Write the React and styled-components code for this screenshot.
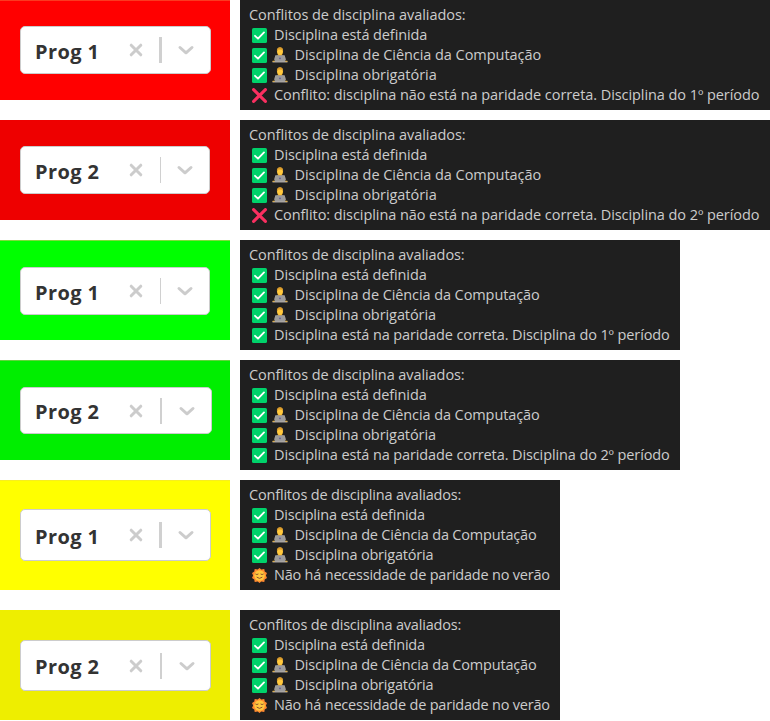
import React from "react";
import styled, { createGlobalStyle } from "styled-components";

const GlobalStyle = createGlobalStyle`
  body { margin: 0; background: #fff; overflow: hidden; }
`;

const Page = styled.main`
  width: 770px;
  height: 721px;
  box-sizing: border-box;
  overflow: hidden;
  font-family: "Open Sans", "Noto Sans", sans-serif;
`;

const Row = styled.section`
  display: flex;
  align-items: flex-start;
  gap: 10px;
  height: 110px;
  margin-bottom: ${(p) => p.$after}px;
`;

const Cell = styled.div`
  flex: none;
  width: 230px;
  height: ${(p) => p.$height}px;
  box-sizing: border-box;
  background: ${(p) => p.$color};
  border-top: 1px solid ${(p) => p.$edge};
  padding: ${(p) => p.$top - 1}px 0 0 20px;
`;

const Select = styled.div`
  display: flex;
  align-items: center;
  box-sizing: border-box;
  width: ${(p) => p.$width}px;
  height: ${(p) => p.$height}px;
  padding-left: 14px;
  background: #fff;
  border: 1px solid #ccc;
  border-radius: 5px;
`;

const Value = styled.span`
  width: 94px;
  color: #333;
  font-size: 20px;
  font-weight: 700;
  line-height: 26px;
  letter-spacing: 0.4px;
  padding-top: 3px;
  white-space: nowrap;
`;

const Glyph = styled.svg`
  flex: none;
  display: block;
`;

const Divider = styled.span`
  display: flex;
  justify-content: center;
  box-sizing: border-box;
  width: ${(p) => p.$width}px;
  padding-left: 1px;
`;

const Separator = styled.span`
  width: ${(p) => p.$width}px;
  height: 26px;
  background: #d0d0d0;
`;

const Tooltip = styled.div`
  box-sizing: border-box;
  width: ${(p) => p.$width}px;
  height: 110px;
  padding: 5px 0 0 9px;
  background: #1f1f1f;
  color: #ccc;
  font-size: 14.5px;
  line-height: 20px;
`;

const Line = styled.div`
  display: flex;
  align-items: center;
  height: 20px;
  padding-left: ${(p) => (p.$icons ? 3 : 0)}px;
  white-space: nowrap;
`;

const Emoji = styled(Glyph)`
  margin-right: 5px;
`;

const Text = styled.span`
  letter-spacing: ${(p) => p.$spacing}px;
  margin-left: ${(p) => p.$shift}px;
`;

const Clear = () => (
  <Glyph width="14" height="14" viewBox="0 0 14 14" fill="none" stroke="#ccc" strokeWidth="3" strokeLinecap="round">
    <path d="M2.200 2.200 11.800 11.800M11.800 2.200 2.200 11.800" />
  </Glyph>
);

const Chevron = () => (
  <Glyph width="18" height="12" viewBox="0 0 18 12" fill="none" stroke="#ccc" strokeWidth="3" strokeLinecap="round" strokeLinejoin="round">
    <path d="M3 3.500 9 8.800 15 3.500" />
  </Glyph>
);

const Check = () => (
  <Emoji width="15" height="15" viewBox="0 0 15 15">
    <rect width="15" height="15" rx="1.6" fill="#00d26a" />
    <path d="M3 7.8 6 10.7 12 4.4" fill="none" stroke="#fff" strokeWidth="1.8" strokeLinecap="round" strokeLinejoin="round" />
  </Emoji>
);

const Cross = () => (
  <Emoji width="15" height="15" viewBox="0 0 15 15" fill="none" stroke="#f92f60" strokeWidth="3.1" strokeLinecap="round">
    <path d="M1.6 1.6 13.4 13.4M13.4 1.6 1.6 13.4" />
  </Emoji>
);

const Technologist = () => (
  <Emoji width="16" height="16" viewBox="0 0 16 16">
    <path d="M2 13.5C2 9.5 4 8 8 8s6 1.500 6 5.500z" fill="#8c8580" />
    <path d="M5.800 6h4.400v3L8 10.600 5.800 9z" fill="#e39d1c" />
    <ellipse cx="8" cy="4.300" rx="3" ry="3.800" fill="#ffc83d" />
    <path d="M4.900 4.500C4.600 1.700 6 .3 8 .3s3.400 1.400 3.100 4.200L10.200 2.800 6.500 2.500z" fill="#d99a2b" />
    <rect x="3" y="8.300" width="10" height="6.500" rx=".8" fill="#9b9b9b" />
    <circle cx="8" cy="11.300" r=".9" fill="#635994" />
    <path d="M.5 14h15v1.500H.5z" fill="#a8a4a2" />
    <path d="M.6 14.200h2M13.400 14.200h2" stroke="#efb12b" strokeWidth="1.100" />
  </Emoji>
);

const Sun = () => (
  <Emoji width="15" height="15" viewBox="0 0 15 15">
    <path d="M7.500 0 9.300 1.600 12.300 .9l.4 2.700L15 5l-1.100 2.500L15 10l-2.300 1.400-.4 2.700-3-.7L7.500 15l-1.800-1.600-3 .7-.4-2.700L0 10l1.100-2.500L0 5l2.300-1.400L2.700.9l3 .7z" fill="#ff8a30" />
    <circle cx="7.500" cy="7.500" r="5.200" fill="#ffc83d" />
    <path d="M3.700 6.200q1.200 1 2.400 0M8.900 6.200q1.200 1 2.400 0M5 9.400q2.500 2.200 5 0" fill="none" stroke="#7d4533" strokeWidth=".9" strokeLinecap="round" />
  </Emoji>
);

const ICONS = { check: Check, cross: Cross, person: Technologist, sun: Sun };

const HEADING = "Conflitos de disciplina avaliados:";
const COMMON = [
  { icons: [], text: HEADING },
  { icons: ["check"], text: "Disciplina está definida" },
  { icons: ["check", "person"], text: "Disciplina de Ciência da Computação" },
  { icons: ["check", "person"], text: "Disciplina obrigatória" },
];
const wrong = (n) => ({ icons: ["cross"], text: `Conflito: disciplina não está na paridade correta. Disciplina do ${n}º período` });
const right = (n) => ({ icons: ["check"], text: `Disciplina está na paridade correta. Disciplina do ${n}º período` });
const summer = { icons: ["sun"], text: "Não há necessidade de paridade no verão" };

const WIDE = [-0.05, -0.1, -0.05, -0.05, -0.07];
const MEDIUM = [-0.08, -0.13, -0.09, -0.08, -0.11];
const NARROW = [-0.18, -0.2, -0.18, -0.2, -0.21];

const ROWS = [
  { label: "Prog 1", color: "#ff0000", edge: "#fb3a20", cell: 100, top: 26, w: 191, h: 48, sep: 3, gap: 34, tip: 530, last: wrong(1), sp: WIDE, after: 10 },
  { label: "Prog 2", color: "#ee0000", edge: "#ee0000", cell: 100, top: 26, w: 190, h: 48, sep: 1, gap: 33, tip: 530, last: wrong(2), sp: WIDE, after: 10 },
  { label: "Prog 1", color: "#00ff00", edge: "#7fdc3c", cell: 100, top: 27, w: 190, h: 48, sep: 1, gap: 33, tip: 440, last: right(1), sp: MEDIUM, after: 10 },
  { label: "Prog 2", color: "#00ee00", edge: "#62d43c", cell: 100, top: 27, w: 192, h: 47, sep: 2, gap: 35, tip: 440, last: right(2), sp: MEDIUM, after: 10 },
  { label: "Prog 1", color: "#ffff00", edge: "#f6ee20", cell: 110, top: 29, w: 191, h: 52, sep: 3, gap: 34, tip: 320, last: summer, sp: NARROW, after: 20 },
  { label: "Prog 2", color: "#eeee00", edge: "#eeee00", cell: 110, top: 30, w: 191, h: 51, sep: 2, gap: 35, tip: 320, last: summer, sp: NARROW, after: 0 },
];

export default function App() {
  return (
    <Page>
      <GlobalStyle />
      {ROWS.map((r, i) => (
        <Row key={i} $after={r.after}>
          <Cell $color={r.color} $edge={r.edge} $height={r.cell} $top={r.top}>
            <Select $width={r.w} $height={r.h}>
              <Value>{r.label}</Value>
              <Clear />
              <Divider $width={r.gap}>
                <Separator $width={r.sep} />
              </Divider>
              <Chevron />
            </Select>
          </Cell>
          <Tooltip $width={r.tip}>
            {[...COMMON, r.last].map((line, j) => (
              <Line key={j} $icons={line.icons.length}>
                {line.icons.map((name, k) => {
                  const Icon = ICONS[name];
                  return <Icon key={k} />;
                })}
                <Text $spacing={r.sp[j]} $shift={line.icons.length === 0 ? 0 : line.icons.length === 1 ? 2 : 1.5}>{line.text}</Text>
              </Line>
            ))}
          </Tooltip>
        </Row>
      ))}
    </Page>
  );
}
